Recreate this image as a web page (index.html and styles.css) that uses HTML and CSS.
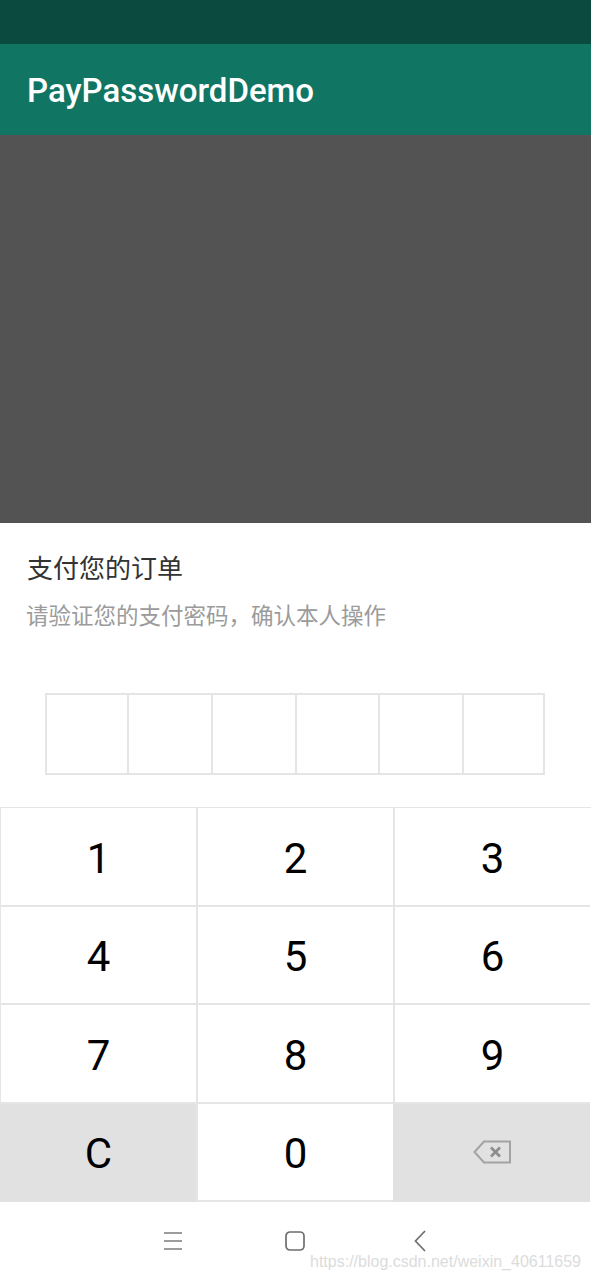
FILE: index.html
```html
<!DOCTYPE html>
<html lang="zh-CN">
<head>
  <meta charset="UTF-8">
  <meta name="viewport" content="width=device-width, initial-scale=1.0">
  <title>PayPasswordDemo</title>
  <link rel="stylesheet" href="styles.css">
</head>
<body>
  <div class="status-bar"></div>
  <header class="toolbar">PayPasswordDemo</header>
  <div class="scrim"></div>

  <section class="sheet">
    <h2 class="sheet-title">支付您的订单</h2>
    <p class="sheet-hint">请验证您的支付密码，确认本人操作</p>

    <div class="pin-row">
      <div class="pin-cell"></div>
      <div class="pin-cell"></div>
      <div class="pin-cell"></div>
      <div class="pin-cell"></div>
      <div class="pin-cell"></div>
      <div class="pin-cell"></div>
    </div>

    <div class="keypad">
      <div class="key">1</div>
      <div class="key">2</div>
      <div class="key">3</div>
      <div class="key">4</div>
      <div class="key">5</div>
      <div class="key">6</div>
      <div class="key">7</div>
      <div class="key">8</div>
      <div class="key">9</div>
      <div class="key key-grey">C</div>
      <div class="key">0</div>
      <div class="key key-grey key-back">
        <svg width="38" height="24" viewBox="0 0 38 24" fill="none" stroke="#a3a3a3" stroke-width="2">
          <path d="M37 1.5H11L1.5 12L11 22.5H37Z"/>
          <path d="M18 7.5L27 16.5M27 7.5L18 16.5" stroke="#8c8c8c" stroke-width="2.6"/>
        </svg>
      </div>
    </div>
  </section>

  <nav class="nav-bar">
    <svg width="18" height="20" viewBox="0 0 18 20" fill="none" stroke="#7c7c7c" stroke-width="1.6">
      <path d="M0 2H18M0 10H18M0 18H18"/>
    </svg>
    <svg width="20" height="20" viewBox="0 0 20 20" fill="none" stroke="#6e6e6e" stroke-width="1.7">
      <rect x="1" y="1" width="18" height="18" rx="4"/>
    </svg>
    <svg width="12" height="22" viewBox="0 0 12 22" fill="none" stroke="#6e6e6e" stroke-width="1.7">
      <path d="M11 1L1.5 11L11 21"/>
    </svg>
  </nav>

  <div class="watermark">https://blog.csdn.net/weixin_40611659</div>
</body>
</html>
```

FILE: styles.css
```css
:root {
  --status-color: #0a4a3f;
  --toolbar-color: #117564;
  --scrim-color: #535353;
  --line-color: #e5e5e5;
  --grey-key: #e1e1e1;
}

body {
  margin: 0;
  position: relative;
  height: 1280px;
  overflow: hidden;
  background: #fff;
  font-family: Roboto, "Noto Sans CJK SC", sans-serif;
}

.status-bar {
  height: 44px;
  background: var(--status-color);
}

.toolbar {
  display: flex;
  align-items: center;
  height: 91px;
  box-sizing: border-box;
  padding: 2px 0 0 27px;
  background: var(--toolbar-color);
  color: #fff;
  font-size: 33px;
  font-weight: 500;
}

.scrim {
  height: 388px;
  background: var(--scrim-color);
}

.sheet {
  height: 679px;
  box-sizing: border-box;
  padding-top: 26px;
}

.sheet-title {
  margin: 0 0 0 27px;
  height: 36px;
  line-height: 36px;
  font-size: 26px;
  font-weight: 400;
  color: #333;
  font-family: "Noto Sans CJK SC", sans-serif;
}

.sheet-hint {
  margin: 13px 0 0 26px;
  height: 32px;
  line-height: 32px;
  font-size: 22.5px;
  color: #9b9b9b;
  font-family: "Noto Sans CJK SC", sans-serif;
}

.pin-row {
  display: grid;
  grid-template-columns: 80px repeat(4, 83.75px) 81px;
  width: 500px;
  height: 82px;
  box-sizing: border-box;
  margin: 63px 0 32px 45px;
  border: 2px solid var(--line-color);
}

.pin-cell {
  border-left: 2px solid var(--line-color);
}

.pin-cell:first-child {
  border-left: 0;
}

.keypad {
  display: grid;
  grid-template-columns: 197px 197px 197px;
  grid-template-rows: repeat(4, 98.5px);
  margin-left: -1px;
  border-top: 1px solid var(--line-color);
}

.key {
  display: flex;
  align-items: center;
  justify-content: center;
  box-sizing: border-box;
  padding-top: 4px;
  border-bottom: 2px solid var(--line-color);
  border-left: 2px solid var(--line-color);
  font-size: 42px;
  color: #000;
}

.key-grey {
  background: var(--grey-key);
  border-color: var(--grey-key);
}

.key-back {
  padding: 0 2px 0 0;
}

.nav-bar {
  display: grid;
  grid-template-columns: 121px 129px 12px;
  align-items: center;
  height: 78px;
  padding-left: 164px;
}

.watermark {
  position: absolute;
  left: 310px;
  top: 1253px;
  font-family: "Liberation Sans", sans-serif;
  font-size: 16px;
  color: #dcdcdc;
  white-space: nowrap;
}
```
